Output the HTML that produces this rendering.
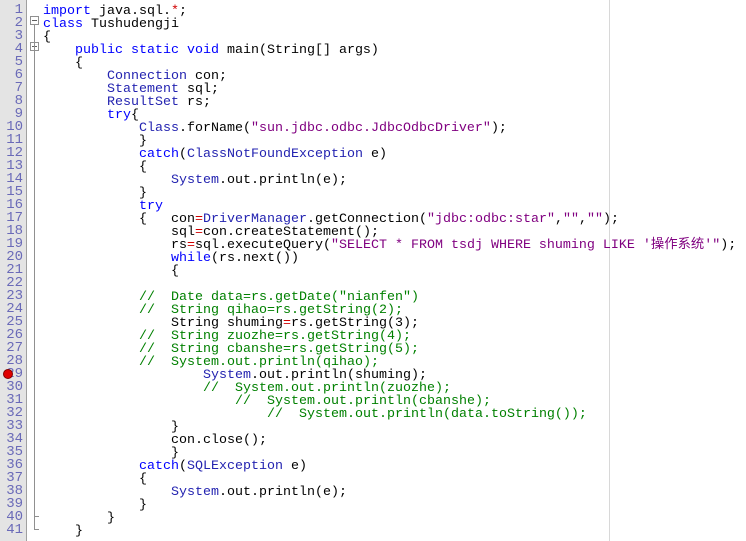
<!DOCTYPE html>
<html><head><meta charset="utf-8"><style>
body{margin:0;width:746px;height:541px;background:#fff;overflow:hidden;position:relative;font-family:"Liberation Mono","Noto Sans CJK SC",monospace;font-size:13.33px;}
#g{position:absolute;left:0;top:0;width:26px;height:541px;background:#e4e4e4;border-right:1px solid #a0a0a0;}
.n{position:absolute;left:0;width:23px;text-align:right;color:#6a6ab8;line-height:13px;height:13px;font-size:14px;}
.l{position:absolute;left:43px;line-height:13px;height:13px;white-space:pre;color:#000;}
.k{color:#0000ff}.c{color:#2323b0}.s{color:#800080}.m{color:#008000}.r{color:#d00000}
#edge{position:absolute;left:609px;top:0;width:1px;height:541px;background:#d8d8d8;}
.fold{position:absolute;left:30px;width:7px;height:7px;border:1px solid #909090;background:#fff;}
.fold:after{content:"";position:absolute;left:1px;top:3px;width:5px;height:1px;background:#606060;}
.vl{position:absolute;left:34px;width:1px;background:#909090;}
.hl{position:absolute;left:34px;height:1px;width:5px;background:#909090;}
#bp{position:absolute;left:3px;top:369px;width:8px;height:8px;border-radius:50%;background:#e00000;border:1px solid #800000;}
</style></head><body>
<div id="g"></div><div id="edge"></div>
<div id="nums"></div>
<div class="fold" style="top:16px"></div>
<div class="fold" style="top:42px"></div>
<div class="vl" style="top:25px;height:504px"></div>
<div class="hl" style="top:516px"></div>
<div class="hl" style="top:529px"></div>
<div id="bp"></div>
<div id="code"></div>
<script>
var L=[
[0,'<span class="k">import</span> java.sql.<span class="r">*</span>;'],
[0,'<span class="k">class</span> Tushudengji'],
[0,'{'],
[4,'<span class="k">public static void</span> main(String[] args)'],
[4,'{'],
[8,'<span class="c">Connection</span> con;'],
[8,'<span class="c">Statement</span> sql;'],
[8,'<span class="c">ResultSet</span> rs;'],
[8,'<span class="k">try</span>{'],
[12,'<span class="c">Class</span>.forName(<span class="s">"sun.jdbc.odbc.JdbcOdbcDriver"</span>);'],
[12,'}'],
[12,'<span class="k">catch</span>(<span class="c">ClassNotFoundException</span> e)'],
[12,'{'],
[16,'<span class="c">System</span>.out.println(e);'],
[12,'}'],
[12,'<span class="k">try</span>'],
[12,'{   con<span class="r">=</span><span class="c">DriverManager</span>.getConnection(<span class="s">"jdbc:odbc:star"</span>,<span class="s">""</span>,<span class="s">""</span>);'],
[16,'sql<span class="r">=</span>con.createStatement();'],
[16,'rs<span class="r">=</span>sql.executeQuery(<span class="s">"SELECT * FROM tsdj WHERE shuming LIKE \'操作系统\'"</span>);'],
[16,'<span class="k">while</span>(rs.next())'],
[16,'{'],
[0,''],
[12,'<span class="m">//  Date data=rs.getDate("nianfen")</span>'],
[12,'<span class="m">//  String qihao=rs.getString(2);</span>'],
[16,'String shuming<span class="r">=</span>rs.getString(3);'],
[12,'<span class="m">//  String zuozhe=rs.getString(4);</span>'],
[12,'<span class="m">//  String cbanshe=rs.getString(5);</span>'],
[12,'<span class="m">//  System.out.println(qihao);</span>'],
[20,'<span class="c">System</span>.out.println(shuming);'],
[20,'<span class="m">//  System.out.println(zuozhe);</span>'],
[24,'<span class="m">//  System.out.println(cbanshe);</span>'],
[28,'<span class="m">//  System.out.println(data.toString());</span>'],
[16,'}'],
[16,'con.close();'],
[16,'}'],
[12,'<span class="k">catch</span>(<span class="c">SQLException</span> e)'],
[12,'{'],
[16,'<span class="c">System</span>.out.println(e);'],
[12,'}'],
[8,'}'],
[4,'}']];
var h='',n='';
for(var i=0;i<L.length;i++){var t=4+i*13;
n+='<div class="n" style="top:'+t+'px">'+(i+1)+'</div>';
h+='<div class="l" style="top:'+(t+1)+'px;left:'+(43+L[i][0]*8)+'px">'+L[i][1]+'</div>';}
document.getElementById('nums').innerHTML=n;document.getElementById('code').innerHTML=h;
</script>
</body></html>
